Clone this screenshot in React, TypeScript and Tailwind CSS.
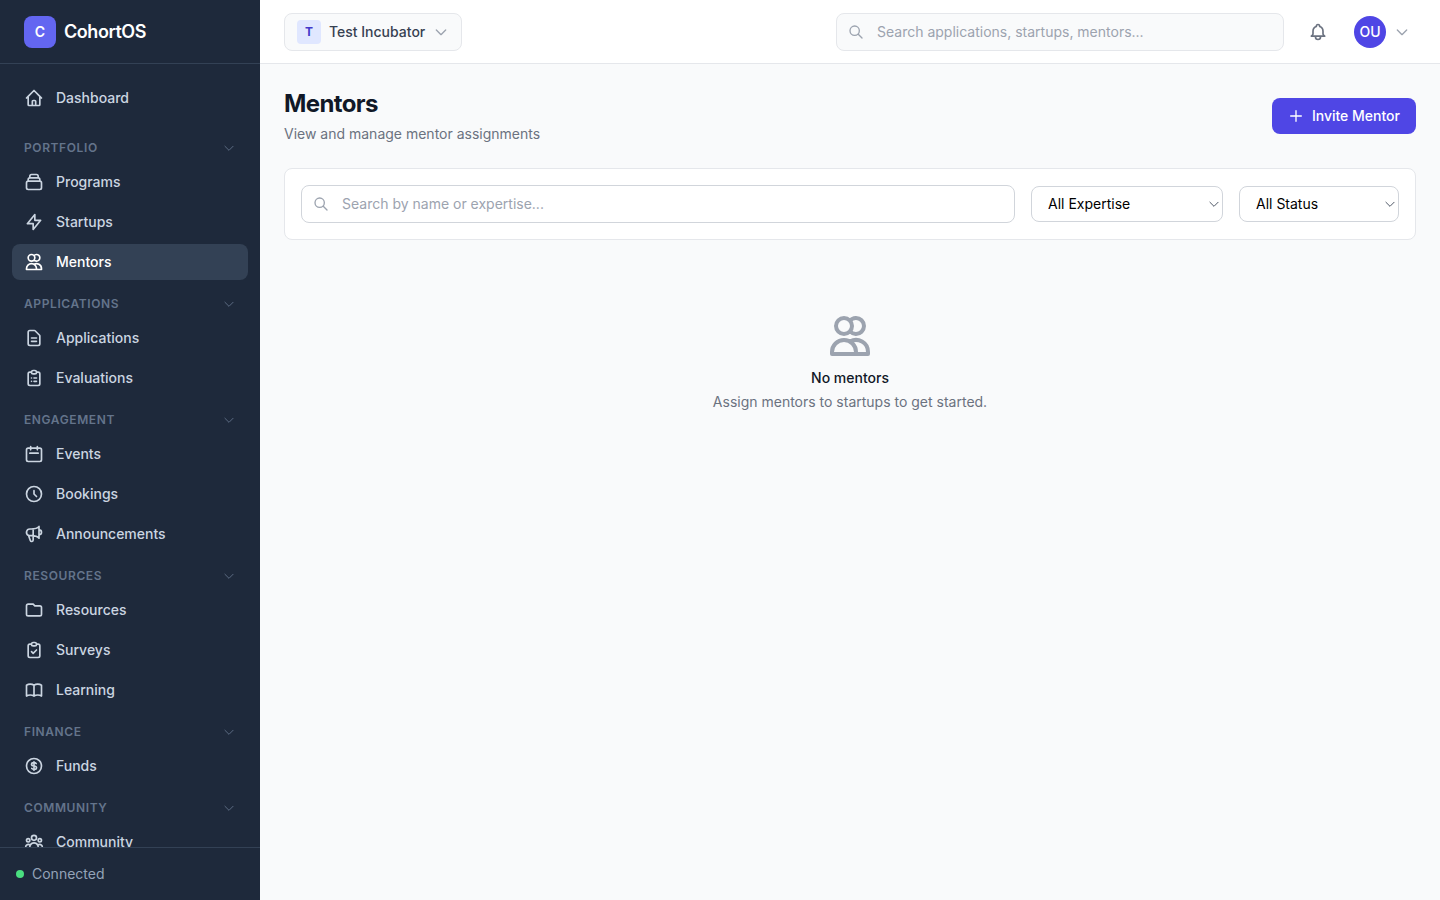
import React from "react";
import type { IconType } from "react-icons";
import {
  HiOutlineBell,
  HiOutlineBookOpen,
  HiOutlineCalendar,
  HiOutlineChevronDown,
  HiOutlineClipboardCheck,
  HiOutlineClipboardList,
  HiOutlineClock,
  HiOutlineCollection,
  HiOutlineCurrencyDollar,
  HiOutlineDocumentText,
  HiOutlineFolder,
  HiOutlineHome,
  HiOutlineLightningBolt,
  HiOutlinePlus,
  HiOutlineSearch,
  HiOutlineSpeakerphone,
  HiOutlineUserGroup,
  HiOutlineUsers,
} from "react-icons/hi";

type Item = { label: string; icon: IconType; active?: boolean };
type Section = { title: string; items: Item[] };

const sections: Section[] = [
  {
    title: "Portfolio",
    items: [
      { label: "Programs", icon: HiOutlineCollection },
      { label: "Startups", icon: HiOutlineLightningBolt },
      { label: "Mentors", icon: HiOutlineUsers, active: true },
    ],
  },
  {
    title: "Applications",
    items: [
      { label: "Applications", icon: HiOutlineDocumentText },
      { label: "Evaluations", icon: HiOutlineClipboardList },
    ],
  },
  {
    title: "Engagement",
    items: [
      { label: "Events", icon: HiOutlineCalendar },
      { label: "Bookings", icon: HiOutlineClock },
      { label: "Announcements", icon: HiOutlineSpeakerphone },
    ],
  },
  {
    title: "Resources",
    items: [
      { label: "Resources", icon: HiOutlineFolder },
      { label: "Surveys", icon: HiOutlineClipboardCheck },
      { label: "Learning", icon: HiOutlineBookOpen },
    ],
  },
  { title: "Finance", items: [{ label: "Funds", icon: HiOutlineCurrencyDollar }] },
  { title: "Community", items: [{ label: "Community", icon: HiOutlineUserGroup }] },
];

function NavLink({ item }: { item: Item }) {
  const Icon = item.icon;
  return (
    <a
      href="#"
      aria-current={item.active ? "page" : undefined}
      className={
        item.active
          ? "flex items-center gap-3 rounded-lg bg-[#334155] px-3 py-2 text-sm font-medium text-white"
          : "flex items-center gap-3 rounded-lg px-3 py-2 text-sm font-medium text-[#cbd5e1]"
      }
    >
      <Icon className="size-5 shrink-0" />
      {item.label}
    </a>
  );
}

function Sidebar() {
  return (
    <aside className="flex w-[260px] shrink-0 flex-col bg-[#1e293b]">
      <div className="flex h-16 shrink-0 items-center gap-2 border-b border-[#334155] px-6">
        <span className="flex size-8 items-center justify-center rounded-lg bg-[#6366f1] text-sm font-semibold text-white">
          C
        </span>
        <span className="text-lg font-semibold tracking-tight text-white">CohortOS</span>
      </div>
      <nav className="min-h-0 flex-1 overflow-y-auto px-3 py-4 [scrollbar-width:none]">
        <NavLink item={{ label: "Dashboard", icon: HiOutlineHome }} />
        <div className="mt-4 flex flex-col gap-2">
          {sections.map((section) => (
            <section key={section.title}>
              <button
                type="button"
                className="flex w-full items-center justify-between px-3 py-2 text-xs font-semibold tracking-wider text-[#64748b] uppercase"
              >
                {section.title}
                <HiOutlineChevronDown className="size-3.5" strokeWidth={1.5} />
              </button>
              <div className="flex flex-col gap-1">
                {section.items.map((item) => (
                  <NavLink key={item.label} item={item} />
                ))}
              </div>
            </section>
          ))}
        </div>
      </nav>
      <div className="flex shrink-0 items-center gap-2 border-t border-[#334155] p-4 text-sm text-[#94a3b8]">
        <span className="size-2 rounded-full bg-[#4ade80]" />
        Connected
      </div>
    </aside>
  );
}

function TopBar() {
  return (
    <header className="flex h-16 shrink-0 items-center justify-between border-b border-[#e5e7eb] bg-white px-6">
      <button
        type="button"
        className="flex items-center gap-2 rounded-lg border border-[#e5e7eb] bg-[#f9fafb] px-3 py-1.5 text-sm font-medium text-[#374151]"
      >
        <span className="flex size-6 items-center justify-center rounded bg-[#e0e7ff] text-xs font-bold text-[#4338ca]">
          T
        </span>
        Test Incubator
        <HiOutlineChevronDown className="size-4 text-[#9ca3af]" />
      </button>
      <div className="flex flex-1 items-center justify-end gap-4">
        <div className="relative w-full max-w-md">
          <HiOutlineSearch className="absolute top-1/2 left-3 size-4 -translate-y-1/2 text-[#9ca3af]" />
          <input
            type="search"
            aria-label="Search applications, startups, mentors"
            placeholder="Search applications, startups, mentors..."
            className="block w-full rounded-lg border border-[#e5e7eb] bg-[#f9fafb] py-2 pr-4 pl-10 text-sm placeholder:text-[#9ca3af]"
          />
        </div>
        <div className="flex items-center gap-3">
          <button type="button" aria-label="Notifications" className="p-2 text-[#6b7280]">
            <HiOutlineBell className="size-5" />
          </button>
          <button type="button" aria-label="Account" className="flex items-center gap-2 p-1.5">
            <span className="flex size-8 items-center justify-center rounded-full bg-[#4f46e5] text-sm font-medium text-white">
              OU
            </span>
            <HiOutlineChevronDown className="size-4 text-[#9ca3af]" />
          </button>
        </div>
      </div>
    </header>
  );
}

function Filter({ label, option, width }: { label: string; option: string; width: string }) {
  return (
    <div className={`relative ${width}`}>
      <select
        aria-label={label}
        className="block h-9 w-full appearance-none rounded-lg border border-[#d1d5db] bg-white pr-6 pl-4 text-sm text-black"
      >
        <option>{option}</option>
      </select>
      <HiOutlineChevronDown
        strokeWidth={1.5}
        className="pointer-events-none absolute top-1/2 right-0.5 size-3.5 -translate-y-1/2 text-[#374151]"
      />
    </div>
  );
}

export default function App() {
  return (
    <div className="flex h-screen bg-[#f9fafb] font-['Inter',sans-serif] antialiased">
      <Sidebar />
      <div className="flex min-w-0 flex-1 flex-col">
        <TopBar />
        <main className="flex-1 overflow-auto p-6">
          <div className="flex items-center justify-between">
            <div>
              <h1 className="text-2xl font-bold tracking-tight text-[#111827]">Mentors</h1>
              <p className="mt-1 text-sm text-[#6b7280]">View and manage mentor assignments</p>
            </div>
            <button
              type="button"
              className="flex items-center gap-2 rounded-lg bg-[#4f46e5] px-4 py-2 text-sm font-medium text-white"
            >
              <HiOutlinePlus className="size-4" />
              Invite Mentor
            </button>
          </div>
          <div className="mt-6 flex items-center gap-4 rounded-lg border border-[#e5e7eb] bg-white p-4">
            <div className="relative flex-1">
              <HiOutlineSearch className="absolute top-1/2 left-3 size-4 -translate-y-1/2 text-[#9ca3af]" />
              <input
                type="text"
                aria-label="Search by name or expertise"
                placeholder="Search by name or expertise..."
                className="block w-full rounded-lg border border-[#d1d5db] bg-white py-2 pr-4 pl-10 text-sm placeholder:text-[#9ca3af]"
              />
            </div>
            <Filter label="Expertise" option="All Expertise" width="w-48" />
            <Filter label="Status" option="All Status" width="w-40" />
          </div>
          <div className="mt-6 flex flex-col items-center py-12 text-center text-sm">
            <HiOutlineUsers className="size-12 text-[#9ca3af]" />
            <h2 className="mt-2 font-medium text-[#111827]">No mentors</h2>
            <p className="mt-1 text-[#6b7280]">Assign mentors to startups to get started.</p>
          </div>
        </main>
      </div>
    </div>
  );
}
